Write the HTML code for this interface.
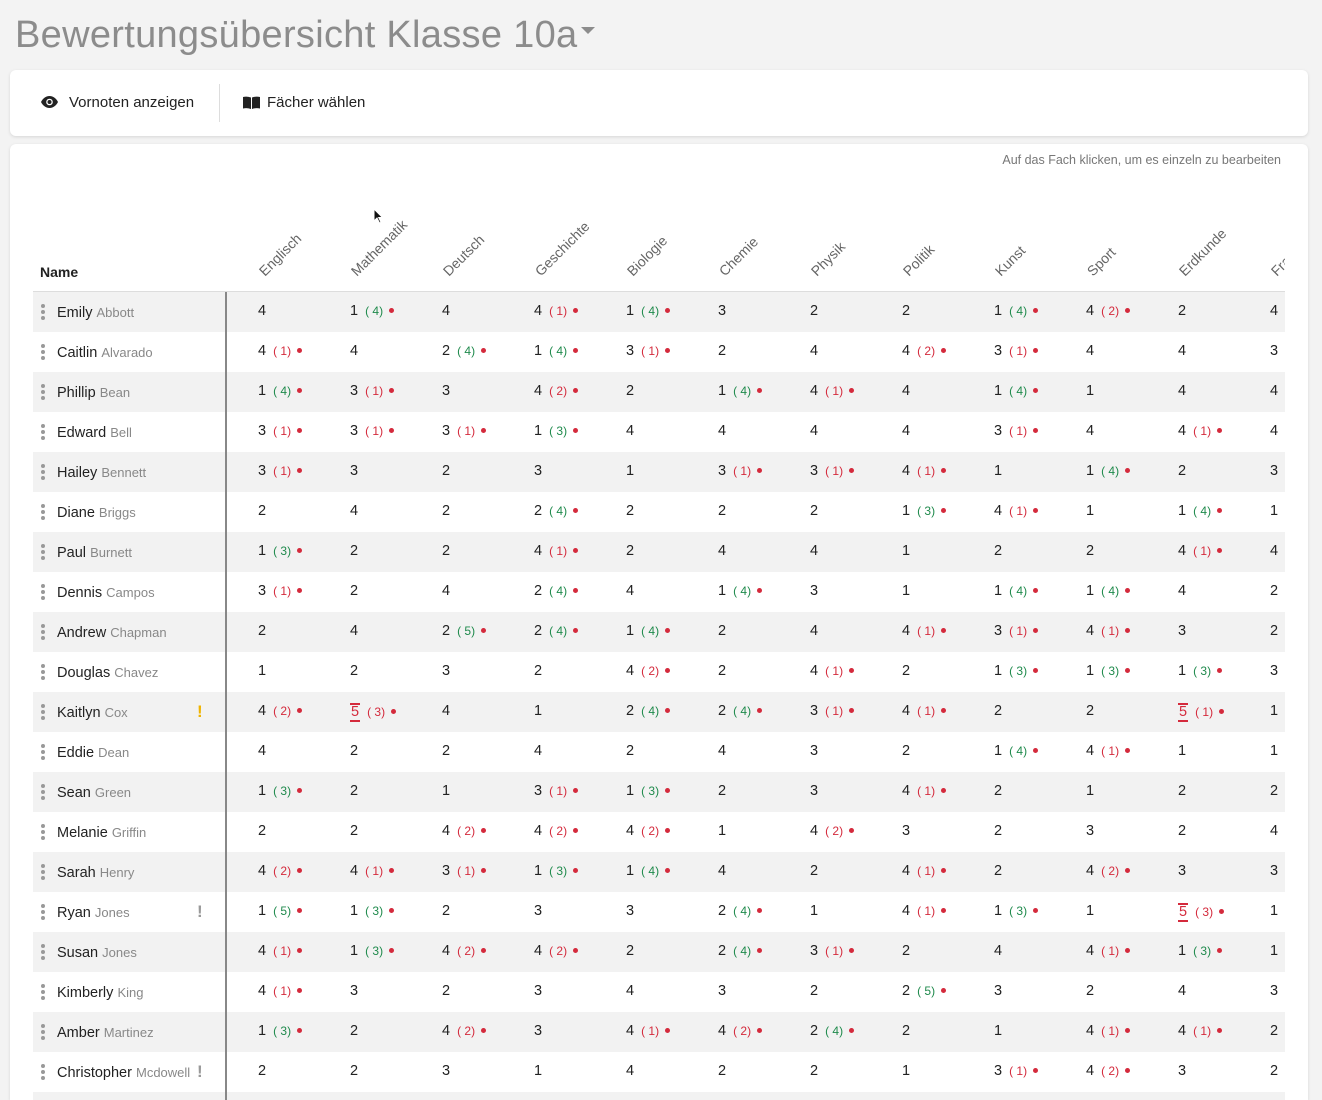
<!DOCTYPE html>
<html><head><meta charset="utf-8"><style>
*{box-sizing:border-box;margin:0;padding:0}
html,body{width:1322px;height:1100px;overflow:hidden}
body{background:#f3f3f3;font-family:"Liberation Sans",sans-serif;color:#222;position:relative}
h1{position:absolute;left:15px;top:14px;font-size:38px;font-weight:normal;color:#8c8c8c;letter-spacing:0.3px}
h1 .car{display:inline-block;width:0;height:0;border-left:7px solid transparent;border-right:7px solid transparent;border-top:7px solid #8c8c8c;vertical-align:middle;margin-left:4px;position:relative;top:-6px}
.bar{position:absolute;left:10px;top:70px;width:1298px;height:66px;background:#fff;border-radius:6px;box-shadow:0 1px 3px rgba(0,0,0,.12)}
.bar .t{position:absolute;top:24px;font-size:15px;color:#222}
.bar .div{position:absolute;left:209px;top:14px;width:1px;height:38px;background:#ddd}
.card{position:absolute;left:10px;top:144px;width:1298px;height:956px;background:#fff;border-radius:6px 6px 0 0;box-shadow:0 1px 3px rgba(0,0,0,.12)}
.hint{position:absolute;right:27px;top:9px;font-size:12.5px;color:#777}
.tbl{position:absolute;left:23px;top:0;width:1252px;height:956px;overflow:hidden}
.hd{position:absolute;font-size:14px;color:#666;transform-origin:0 100%;transform:rotate(-45deg);white-space:nowrap;top:119px}
.nm{position:absolute;left:7px;top:120px;font-weight:bold;font-size:14px}
.hline{position:absolute;left:0;top:147px;width:1252px;height:1px;background:#ddd}
.rows{position:absolute;left:0;top:148px;width:1252px}
.r{height:40px;position:relative;white-space:nowrap}
.r:nth-child(odd){background:#f2f2f2}
.n{position:absolute;left:0;top:0;width:194px;height:40px;border-right:2px solid #888}
.dots{position:absolute;left:8px;top:12px;width:4px;height:16px}
.dots i{display:block;width:4px;height:4px;border-radius:50%;background:#999;margin-bottom:2px}
.fn{position:absolute;left:24px;top:13px;font-size:14.5px;color:#222}
.fn em{font-style:normal;font-size:13px;color:#888}
.ex{position:absolute;left:164px;top:10px;font-weight:bold;font-size:17px}
.c{position:absolute;left:225px;top:0;height:40px}
.c i{display:inline-block;width:92px;font-style:normal;font-size:14.5px;padding-top:11px;vertical-align:top}
.c b,.c u{font-weight:normal;text-decoration:none;font-size:12px;margin-left:7px;position:relative;top:0}
.c b{color:#1f8a4c}.c u{color:#d42a3c}
.c b::after,.c u::after{content:"";display:inline-block;width:5px;height:5px;border-radius:50%;background:#d42a3c;margin-left:6px;vertical-align:middle;position:relative;top:-1px}
.c .x{color:#d42a3c;border-top:2px solid #d42a3c;border-bottom:2px solid #d42a3c;line-height:15px;display:inline-block;padding:0 1px}
</style></head><body>
<h1>Bewertungsübersicht Klasse 10a<span class="car"></span></h1>
<div class="bar">
<svg style="position:absolute;left:31px;top:26px" width="17" height="12" viewBox="0 0 17 12"><path d="M8.5 0C4.5 0 1.5 3 0 6c1.5 3 4.5 6 8.5 6s7-3 8.5-6C15.5 3 12.5 0 8.5 0z" fill="#222"/><circle cx="8.5" cy="6" r="3.3" fill="#fff"/><circle cx="8.5" cy="6" r="2" fill="#222"/></svg>
<span class="t" style="left:59px">Vornoten anzeigen</span>
<div class="div"></div>
<svg style="position:absolute;left:233px;top:26px" width="17" height="13" viewBox="0 0 17 13"><path d="M0 1Q4 0 8 1.5V13Q4 11.5 0 12.5z M9 1.5Q13 0 17 1V12.5Q13 11.5 9 13z" fill="#222"/></svg>
<span class="t" style="left:257px">Fächer wählen</span>
</div>
<svg style="position:absolute;left:373px;top:208px;z-index:5" width="10" height="16" viewBox="0 0 10 16"><path d="M1 1V13L4 10L6.5 15L8 14.3L5.7 9.5H9.5Z" fill="#111" stroke="#fff" stroke-width="1"/></svg>
<div class="card">
<div class="hint">Auf das Fach klicken, um es einzeln zu bearbeiten</div>
<div class="tbl">
<div class="nm">Name</div>
<span class="hd" style="left:234px">Englisch</span>
<span class="hd" style="left:326px">Mathematik</span>
<span class="hd" style="left:418px">Deutsch</span>
<span class="hd" style="left:510px">Geschichte</span>
<span class="hd" style="left:602px">Biologie</span>
<span class="hd" style="left:694px">Chemie</span>
<span class="hd" style="left:786px">Physik</span>
<span class="hd" style="left:878px">Politik</span>
<span class="hd" style="left:970px">Kunst</span>
<span class="hd" style="left:1062px">Sport</span>
<span class="hd" style="left:1154px">Erdkunde</span>
<span class="hd" style="left:1246px">Französisch</span>
<div class="hline"></div>
<div class="rows">
<div class="r"><div class="n"><div class="dots"><i></i><i></i><i></i></div><span class="fn">Emily <em>Abbott</em></span></div><div class="c"><i>4</i><i>1<b>( 4)</b></i><i>4</i><i>4<u>( 1)</u></i><i>1<b>( 4)</b></i><i>3</i><i>2</i><i>2</i><i>1<b>( 4)</b></i><i>4<u>( 2)</u></i><i>2</i><i>4</i></div></div>
<div class="r"><div class="n"><div class="dots"><i></i><i></i><i></i></div><span class="fn">Caitlin <em>Alvarado</em></span></div><div class="c"><i>4<u>( 1)</u></i><i>4</i><i>2<b>( 4)</b></i><i>1<b>( 4)</b></i><i>3<u>( 1)</u></i><i>2</i><i>4</i><i>4<u>( 2)</u></i><i>3<u>( 1)</u></i><i>4</i><i>4</i><i>3</i></div></div>
<div class="r"><div class="n"><div class="dots"><i></i><i></i><i></i></div><span class="fn">Phillip <em>Bean</em></span></div><div class="c"><i>1<b>( 4)</b></i><i>3<u>( 1)</u></i><i>3</i><i>4<u>( 2)</u></i><i>2</i><i>1<b>( 4)</b></i><i>4<u>( 1)</u></i><i>4</i><i>1<b>( 4)</b></i><i>1</i><i>4</i><i>4</i></div></div>
<div class="r"><div class="n"><div class="dots"><i></i><i></i><i></i></div><span class="fn">Edward <em>Bell</em></span></div><div class="c"><i>3<u>( 1)</u></i><i>3<u>( 1)</u></i><i>3<u>( 1)</u></i><i>1<b>( 3)</b></i><i>4</i><i>4</i><i>4</i><i>4</i><i>3<u>( 1)</u></i><i>4</i><i>4<u>( 1)</u></i><i>4</i></div></div>
<div class="r"><div class="n"><div class="dots"><i></i><i></i><i></i></div><span class="fn">Hailey <em>Bennett</em></span></div><div class="c"><i>3<u>( 1)</u></i><i>3</i><i>2</i><i>3</i><i>1</i><i>3<u>( 1)</u></i><i>3<u>( 1)</u></i><i>4<u>( 1)</u></i><i>1</i><i>1<b>( 4)</b></i><i>2</i><i>3</i></div></div>
<div class="r"><div class="n"><div class="dots"><i></i><i></i><i></i></div><span class="fn">Diane <em>Briggs</em></span></div><div class="c"><i>2</i><i>4</i><i>2</i><i>2<b>( 4)</b></i><i>2</i><i>2</i><i>2</i><i>1<b>( 3)</b></i><i>4<u>( 1)</u></i><i>1</i><i>1<b>( 4)</b></i><i>1</i></div></div>
<div class="r"><div class="n"><div class="dots"><i></i><i></i><i></i></div><span class="fn">Paul <em>Burnett</em></span></div><div class="c"><i>1<b>( 3)</b></i><i>2</i><i>2</i><i>4<u>( 1)</u></i><i>2</i><i>4</i><i>4</i><i>1</i><i>2</i><i>2</i><i>4<u>( 1)</u></i><i>4</i></div></div>
<div class="r"><div class="n"><div class="dots"><i></i><i></i><i></i></div><span class="fn">Dennis <em>Campos</em></span></div><div class="c"><i>3<u>( 1)</u></i><i>2</i><i>4</i><i>2<b>( 4)</b></i><i>4</i><i>1<b>( 4)</b></i><i>3</i><i>1</i><i>1<b>( 4)</b></i><i>1<b>( 4)</b></i><i>4</i><i>2</i></div></div>
<div class="r"><div class="n"><div class="dots"><i></i><i></i><i></i></div><span class="fn">Andrew <em>Chapman</em></span></div><div class="c"><i>2</i><i>4</i><i>2<b>( 5)</b></i><i>2<b>( 4)</b></i><i>1<b>( 4)</b></i><i>2</i><i>4</i><i>4<u>( 1)</u></i><i>3<u>( 1)</u></i><i>4<u>( 1)</u></i><i>3</i><i>2</i></div></div>
<div class="r"><div class="n"><div class="dots"><i></i><i></i><i></i></div><span class="fn">Douglas <em>Chavez</em></span></div><div class="c"><i>1</i><i>2</i><i>3</i><i>2</i><i>4<u>( 2)</u></i><i>2</i><i>4<u>( 1)</u></i><i>2</i><i>1<b>( 3)</b></i><i>1<b>( 3)</b></i><i>1<b>( 3)</b></i><i>3</i></div></div>
<div class="r"><div class="n"><div class="dots"><i></i><i></i><i></i></div><span class="fn">Kaitlyn <em>Cox</em></span><span class="ex" style="color:#f0b400">!</span></div><div class="c"><i>4<u>( 2)</u></i><i><span class="x">5</span><u>( 3)</u></i><i>4</i><i>1</i><i>2<b>( 4)</b></i><i>2<b>( 4)</b></i><i>3<u>( 1)</u></i><i>4<u>( 1)</u></i><i>2</i><i>2</i><i><span class="x">5</span><u>( 1)</u></i><i>1</i></div></div>
<div class="r"><div class="n"><div class="dots"><i></i><i></i><i></i></div><span class="fn">Eddie <em>Dean</em></span></div><div class="c"><i>4</i><i>2</i><i>2</i><i>4</i><i>2</i><i>4</i><i>3</i><i>2</i><i>1<b>( 4)</b></i><i>4<u>( 1)</u></i><i>1</i><i>1</i></div></div>
<div class="r"><div class="n"><div class="dots"><i></i><i></i><i></i></div><span class="fn">Sean <em>Green</em></span></div><div class="c"><i>1<b>( 3)</b></i><i>2</i><i>1</i><i>3<u>( 1)</u></i><i>1<b>( 3)</b></i><i>2</i><i>3</i><i>4<u>( 1)</u></i><i>2</i><i>1</i><i>2</i><i>2</i></div></div>
<div class="r"><div class="n"><div class="dots"><i></i><i></i><i></i></div><span class="fn">Melanie <em>Griffin</em></span></div><div class="c"><i>2</i><i>2</i><i>4<u>( 2)</u></i><i>4<u>( 2)</u></i><i>4<u>( 2)</u></i><i>1</i><i>4<u>( 2)</u></i><i>3</i><i>2</i><i>3</i><i>2</i><i>4</i></div></div>
<div class="r"><div class="n"><div class="dots"><i></i><i></i><i></i></div><span class="fn">Sarah <em>Henry</em></span></div><div class="c"><i>4<u>( 2)</u></i><i>4<u>( 1)</u></i><i>3<u>( 1)</u></i><i>1<b>( 3)</b></i><i>1<b>( 4)</b></i><i>4</i><i>2</i><i>4<u>( 1)</u></i><i>2</i><i>4<u>( 2)</u></i><i>3</i><i>3</i></div></div>
<div class="r"><div class="n"><div class="dots"><i></i><i></i><i></i></div><span class="fn">Ryan <em>Jones</em></span><span class="ex" style="color:#999">!</span></div><div class="c"><i>1<b>( 5)</b></i><i>1<b>( 3)</b></i><i>2</i><i>3</i><i>3</i><i>2<b>( 4)</b></i><i>1</i><i>4<u>( 1)</u></i><i>1<b>( 3)</b></i><i>1</i><i><span class="x">5</span><u>( 3)</u></i><i>1</i></div></div>
<div class="r"><div class="n"><div class="dots"><i></i><i></i><i></i></div><span class="fn">Susan <em>Jones</em></span></div><div class="c"><i>4<u>( 1)</u></i><i>1<b>( 3)</b></i><i>4<u>( 2)</u></i><i>4<u>( 2)</u></i><i>2</i><i>2<b>( 4)</b></i><i>3<u>( 1)</u></i><i>2</i><i>4</i><i>4<u>( 1)</u></i><i>1<b>( 3)</b></i><i>1</i></div></div>
<div class="r"><div class="n"><div class="dots"><i></i><i></i><i></i></div><span class="fn">Kimberly <em>King</em></span></div><div class="c"><i>4<u>( 1)</u></i><i>3</i><i>2</i><i>3</i><i>4</i><i>3</i><i>2</i><i>2<b>( 5)</b></i><i>3</i><i>2</i><i>4</i><i>3</i></div></div>
<div class="r"><div class="n"><div class="dots"><i></i><i></i><i></i></div><span class="fn">Amber <em>Martinez</em></span></div><div class="c"><i>1<b>( 3)</b></i><i>2</i><i>4<u>( 2)</u></i><i>3</i><i>4<u>( 1)</u></i><i>4<u>( 2)</u></i><i>2<b>( 4)</b></i><i>2</i><i>1</i><i>4<u>( 1)</u></i><i>4<u>( 1)</u></i><i>2</i></div></div>
<div class="r"><div class="n"><div class="dots"><i></i><i></i><i></i></div><span class="fn">Christopher <em>Mcdowell</em></span><span class="ex" style="color:#999">!</span></div><div class="c"><i>2</i><i>2</i><i>3</i><i>1</i><i>4</i><i>2</i><i>2</i><i>1</i><i>3<u>( 1)</u></i><i>4<u>( 2)</u></i><i>3</i><i>2</i></div></div>
<div class="r"><div class="n"></div></div>
</div>
</div>
</div>
</body></html>
